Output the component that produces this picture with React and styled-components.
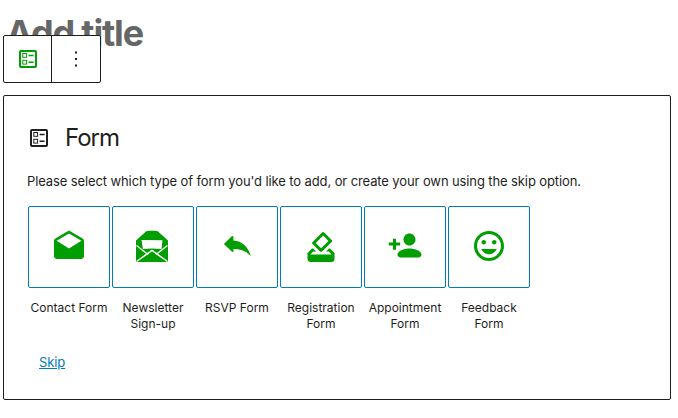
import React from "react";
import styled, { createGlobalStyle } from "styled-components";
import { MdDrafts, MdHowToVote, MdInsertEmoticon } from "react-icons/md";

const Global = createGlobalStyle`
  html, body { margin: 0; padding: 0; background: #fff; }
  body { font-family: Inter, "Liberation Sans", sans-serif; color: #1e1e1e; }
`;

const Page = styled.div`
  position: relative;
  width: 678px;
  height: 418px;
  padding: 0 7px 0 3px;
  box-sizing: border-box;
  overflow: hidden;
`;
const Title = styled.h1`
  margin: 0;
  padding: 13px 0 0 3px;
  height: 95px;
  box-sizing: border-box;
  font-size: 36px;
  line-height: 40px;
  letter-spacing: -1.15px;
  font-weight: 700;
  color: #666;
`;
const Toolbar = styled.div`
  position: absolute;
  left: 3px;
  top: 35px;
  display: flex;
  height: 48px;
  box-sizing: border-box;
  background: #fff;
  border: 1px solid #1e1e1e;
  border-radius: 2px;
`;
const ToolButton = styled.div`
  width: 47px;
  display: flex;
  align-items: center;
  justify-content: center;
  & + & { border-left: 1px solid #1e1e1e; width: 48px; }
`;
const Card = styled.section`
  height: 305px;
  box-sizing: border-box;
  border: 1px solid #1e1e1e;
  border-radius: 2px;
  padding: 24px 23px;
`;
const Header = styled.div`
  display: flex;
  align-items: center;
  gap: 14px;
  height: 36px;
  font-size: 24px;
  line-height: 36px;
  letter-spacing: -1px;
  margin-bottom: 16px;
`;
const Intro = styled.p`
  margin: 0 0 16px;
  font-size: 13px;
  line-height: 18px;
  letter-spacing: -0.11px;
  height: 18px;
  white-space: nowrap;
`;
const Options = styled.ul`
  display: flex;
  gap: 2px;
  margin: 0 0 0 1px;
  padding: 0;
  list-style: none;
`;
const Option = styled.li`
  width: 82px;
  display: flex;
  flex-direction: column;
  align-items: center;
`;
const OptionButton = styled.div`
  width: 82px;
  height: 82px;
  box-sizing: border-box;
  border: 1px solid #007cba;
  border-radius: 2px;
  padding-bottom: ${(p) => p.$lift || 0}px;
  display: flex;
  align-items: center;
  justify-content: center;
  color: #009e00;
`;
const OptionLabel = styled.span`
  margin-top: 12px;
  font-size: 12px;
  line-height: 16px;
  text-align: center;
`;
const Skip = styled.a`
  display: block;
  margin: 21px 0 0 12px;
  font-size: 13px;
  line-height: 18px;
  letter-spacing: -0.1px;
  color: #007cba;
  text-decoration: underline;
`;

const FormIcon = ({ color }) => (
  <svg width="24" height="24" viewBox="0 0 24 24" fill="none">
    <rect x="4" y="4" width="16" height="16" rx="1" stroke={color} strokeWidth="2" />
    <rect x="6.8" y="6.5" width="3.8" height="3.8" stroke={color} strokeWidth="1" />
    <rect x="6.8" y="13.3" width="3.8" height="3.8" stroke={color} strokeWidth="1" />
    <path d="M12.6 8.5h5M12.6 15.2h5" stroke={color} strokeWidth="1.5" />
  </svg>
);
const MoreIcon = () => (
  <svg width="24" height="24" viewBox="0 0 24 24" fill="#1e1e1e">
    <rect x="11" y="4.5" width="2" height="2" />
    <rect x="11" y="11" width="2" height="2" />
    <rect x="11" y="17.5" width="2" height="2" />
  </svg>
);
const NewsletterIcon = () => (
  <svg width="36" height="36" viewBox="0 0 36 36">
    <path fill="currentColor" d="M1 11.5 11 2.6Q12 1.7 13.5 1.7H20.5Q22 1.7 23 2.6L33 11.5V33H1z" />
    <path fill="#fff" d="M6.5 11 27.5 11.3 26.5 20 17 19.5 8 20z" />
    <path fill="none" stroke="#fff" strokeWidth="1.5" d="M1.5 16.5 13 25.5M32.5 16.5 21 25.5M1.5 32.5 17 21.5 32.5 32.5" />
  </svg>
);
const ReplyIcon = () => (
  <svg width="36" height="36" viewBox="0 0 24 24" fill="currentColor">
    <path d="M3.3 10 8.5 4.9Q9.6 4.2 9.6 5.5V7.7C15.5 8 19.5 12 21.3 18.2 18.5 15 15 13.3 9.6 13.3V14.7Q9.6 15.8 8.5 15Z" />
  </svg>
);
const PersonAddIcon = () => (
  <svg width="36" height="36" viewBox="0 0 24 24" fill="currentColor">
    <path d="M15 11c2.21 0 4-1.79 4-4s-1.79-4-4-4-4 1.79-4 4 1.79 4 4 4zM6 9V6.5H4V9H1.2v2H4v2.8h2V11h2.8V9zM15 13c-2.67 0-8 1.34-8 4 0 1.1.9 2 2 2h12c1.1 0 2-.9 2-2 0-2.66-5.33-4-8-4z" />
  </svg>
);

const forms = [
  { label: "Contact Form", icon: <MdDrafts size={36} /> },
  { label: "Newsletter Sign-up", icon: <NewsletterIcon /> },
  { label: "RSVP Form", icon: <ReplyIcon /> },
  { label: "Registration Form", icon: <MdHowToVote size={36} /> },
  { label: "Appointment Form", icon: <PersonAddIcon /> },
  { label: "Feedback Form", icon: <MdInsertEmoticon size={36} />, lift: 2 },
];

export default function App() {
  return (
    <Page>
      <Global />
      <Title>Add title</Title>
      <Toolbar>
        <ToolButton><FormIcon color="#009e00" /></ToolButton>
        <ToolButton><MoreIcon /></ToolButton>
      </Toolbar>
      <Card>
        <Header><FormIcon color="#1e1e1e" />Form</Header>
        <Intro>Please select which type of form you'd like to add, or create your own using the skip option.</Intro>
        <Options>
          {forms.map((f) => (
            <Option key={f.label}>
              <OptionButton $lift={f.lift}>{f.icon}</OptionButton>
              <OptionLabel>{f.label}</OptionLabel>
            </Option>
          ))}
        </Options>
        <Skip href="#">Skip</Skip>
      </Card>
    </Page>
  );
}
